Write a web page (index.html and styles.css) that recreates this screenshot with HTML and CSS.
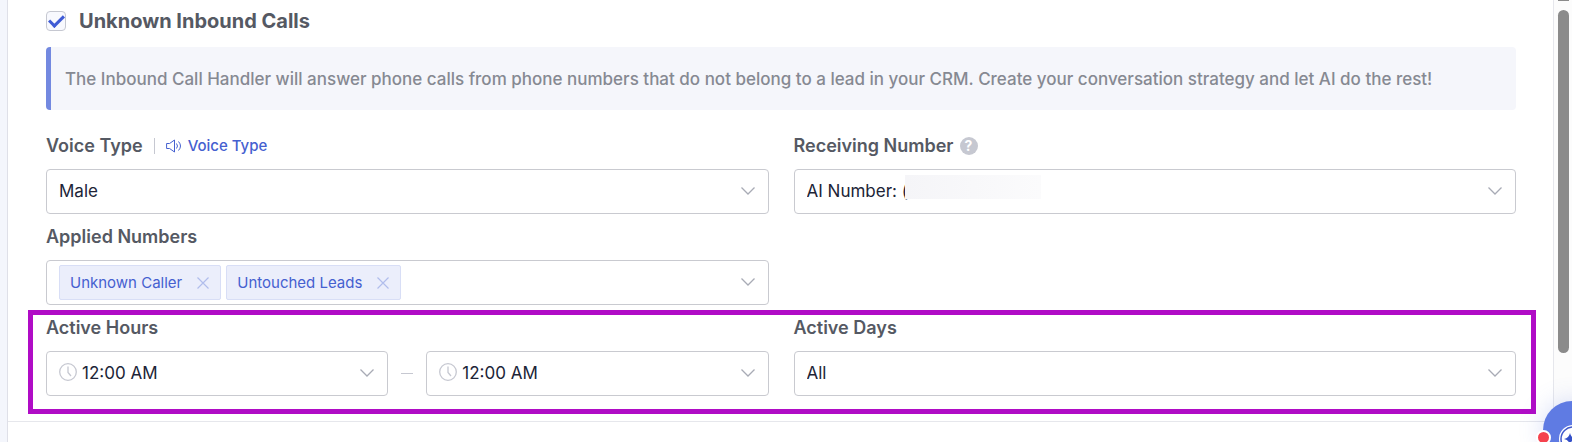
FILE: index.html
```html
<!DOCTYPE html>
<html lang="en">

<head>
    <meta charset="utf-8">
    <title>Inbound Call Handler</title>
    <meta name="viewport" content="initial-scale=1.0, width=device-width">
    <link rel="stylesheet" href="styles.css">
</head>

<body>
    <svg class="sprite" aria-hidden="true">
        <symbol id="chevron" viewBox="0 0 16 16">
            <path d="M1.5 4.5L8 11l6.5-6.5" fill="none" stroke="currentColor" stroke-width="1.3" />
        </symbol>
        <symbol id="cross" viewBox="0 0 12 12">
            <path d="M.5 .5l11 11M11.5 .5l-11 11" fill="none" stroke="currentColor" stroke-width="1.2" />
        </symbol>
        <symbol id="clock" viewBox="0 0 18 18">
            <circle cx="9" cy="9" r="8.3" fill="none" stroke="currentColor" stroke-width="1.3" />
            <path d="M9 3.5v6l3 3.5" fill="none" stroke="currentColor" stroke-width="1.3" />
        </symbol>
    </svg>

    <div id="app">
        <main class="panel">
            <form class="settings" action="javascript:void(0)">
                <label class="title">
                    <input type="checkbox" class="check" checked>
                    <span>Unknown Inbound Calls</span>
                </label>
                <p class="notice">The Inbound Call Handler will answer phone calls from phone numbers that do not belong to a lead in your CRM. Create your conversation strategy and let AI do the rest!</p>

                <div class="row">
                    <div class="field">
                        <div class="caption">
                            <label for="voice">Voice Type</label>
                            <a href="#" class="preview">
                                <svg width="16" height="14" viewBox="0 0 16 14" fill="none" stroke="currentColor">
                                    <path d="M.6 4.5h3L8.5 1v12L3.6 9.5h-3z" />
                                    <path d="M10.5 4.5q2 2.5 0 5M12.5 2.5q4 4.5 0 9" />
                                </svg>
                                Voice Type
                            </a>
                        </div>
                        <div class="select">
                            <select id="voice">
                                <option>Male</option>
                                <option>Female</option>
                            </select>
                            <svg class="chevron"><use href="#chevron" /></svg>
                        </div>
                    </div>
                    <div class="field">
                        <div class="caption">
                            <label for="number">Receiving Number</label>
                            <span class="help">?</span>
                        </div>
                        <div class="select">
                            <select id="number">
                                <option>AI Number: (</option>
                            </select>
                            <span class="masked"></span>
                            <svg class="chevron"><use href="#chevron" /></svg>
                        </div>
                    </div>
                </div>

                <div class="row">
                    <div class="field">
                        <div class="caption" id="applied">Applied Numbers</div>
                        <div class="select tags" role="group" aria-labelledby="applied">
                            <span class="tag">Unknown Caller
                                <button type="button" aria-label="Remove"><svg width="12" height="12"><use href="#cross" /></svg></button>
                            </span>
                            <span class="tag">Untouched Leads
                                <button type="button" aria-label="Remove"><svg width="12" height="12"><use href="#cross" /></svg></button>
                            </span>
                            <svg class="chevron"><use href="#chevron" /></svg>
                        </div>
                    </div>
                </div>

                <div class="row highlight">
                    <div class="field">
                        <div class="caption"><label for="from">Active Hours</label></div>
                        <div class="hours">
                            <div class="select time">
                                <svg class="clock"><use href="#clock" /></svg>
                                <select id="from">
                                    <option>12:00 AM</option>
                                </select>
                                <svg class="chevron"><use href="#chevron" /></svg>
                            </div>
                            <span class="dash"></span>
                            <div class="select time">
                                <svg class="clock"><use href="#clock" /></svg>
                                <select id="to" aria-label="Active hours end">
                                    <option>12:00 AM</option>
                                </select>
                                <svg class="chevron"><use href="#chevron" /></svg>
                            </div>
                        </div>
                    </div>
                    <div class="field">
                        <div class="caption"><label for="days">Active Days</label></div>
                        <div class="select">
                            <select id="days">
                                <option>All</option>
                            </select>
                            <svg class="chevron"><use href="#chevron" /></svg>
                        </div>
                    </div>
                </div>
            </form>
        </main>
        <div class="scrollbar">
            <div class="arrow"></div>
            <div class="thumb"></div>
        </div>

        <button type="button" class="assistant" aria-label="AI assistant">
            <svg width="58" height="58" viewBox="0 0 58 58">
                <circle cx="30" cy="38" r="14" fill="#fff" />
                <circle cx="30" cy="38" r="12" fill="#fff" stroke="#4059cc" stroke-width="1.5" />
                <path d="M27 32q1 5 6 6q-5 1-6 6q-1-5-6-6q5-1 6-6z" fill="#3450c8" />
            </svg>
            <span class="dot"></span>
        </button>
    </div>
</body>

</html>
```

FILE: styles.css
```css
* {
    box-sizing: border-box;
}

body {
    margin: 0;
    background: #fff;
    color: #202437;
    font-family: Inter, "Liberation Sans", sans-serif;
    font-size: 17px;
    line-height: 24px;
}

.sprite {
    display: none;
}

#app {
    position: relative;
    display: flex;
    height: calc(100vh - 3px);
    padding-left: 7px;
    background: #f4f6fc;
    overflow: hidden;
}

.panel {
    flex: 1;
    background: #fff;
    border-left: 1px solid #dfe0e8;
    border-right: 1px solid #e6e7ec;
}

.settings {
    padding: 9px 37px 25px 38px;
    border-bottom: 1px solid #e6e7ec;
}

.title {
    display: flex;
    align-items: center;
    gap: 13px;
    font-size: 20px;
    font-weight: 700;
    color: #555963;
}

.check {
    appearance: none;
    width: 20px;
    height: 20px;
    margin: 0;
    border: 1px solid #c6c8d1;
    border-radius: 4px;
    background: #f8f9fe;
    display: grid;
    place-items: center;
}

.check:checked::before {
    content: "";
    width: 12px;
    height: 6px;
    margin-bottom: 4px;
    border-left: 3px solid #3f5bd5;
    border-bottom: 3px solid #3f5bd5;
    transform: rotate(-45deg);
}

.notice {
    margin: 14px 0 24px;
    padding: 20px 14px 19px;
    border-left: 5px solid #7389e0;
    border-radius: 4px;
    background: #f5f6fb;
    color: #868992;
    font-weight: 500;
}

.row {
    position: relative;
    display: grid;
    grid-template-columns: 1fr 1fr;
    gap: 25px;
    margin-bottom: 11px;
}

.row:last-child {
    margin-bottom: 0;
}

.caption {
    display: flex;
    align-items: center;
    height: 24px;
    margin-bottom: 11px;
    font-size: 18px;
    font-weight: 600;
    color: #555963;
}

.preview {
    display: flex;
    align-items: center;
    gap: 6px;
    height: 16px;
    margin-left: 11px;
    padding-left: 11px;
    border-left: 1px solid #c6c8d1;
    color: #4560d0;
    font-size: 15px;
    font-weight: 500;
    text-decoration: none;
}

.help {
    width: 18px;
    height: 18px;
    margin-left: 6px;
    border-radius: 50%;
    background: #c6c8d1;
    color: #fff;
    font-size: 14px;
    font-weight: 700;
    line-height: 18px;
    text-align: center;
}

.select {
    position: relative;
    height: 45px;
    border: 1px solid #c9cad0;
    border-radius: 4px;
    background: #fff;
}

.select select {
    appearance: none;
    width: 100%;
    height: 100%;
    padding: 0 40px 2px 12px;
    border: 0;
    background: none;
    color: inherit;
    font: inherit;
}

.chevron {
    position: absolute;
    top: 13px;
    right: 12px;
    width: 16px;
    height: 16px;
    color: #a8abb5;
    pointer-events: none;
}

.masked {
    position: absolute;
    top: 5px;
    left: 110px;
    width: 136px;
    height: 24px;
    background: linear-gradient(90deg, #f5f5f8, #fbfbfc);
}

.tags {
    display: flex;
    align-items: center;
    gap: 5px;
    padding-left: 12px;
}

.tag {
    display: flex;
    align-items: center;
    gap: 15px;
    height: 35px;
    padding: 0 11px 0 10px;
    border: 1px solid #d8def6;
    border-radius: 2px;
    background: #ebeefb;
    color: #4560d0;
    font-size: 15px;
}

.tag button {
    display: flex;
    padding: 0;
    border: 0;
    background: none;
    color: #b1bdec;
}

.hours {
    display: flex;
    align-items: center;
    gap: 13px;
}

.time {
    flex: 1;
}

.select.time select {
    padding-left: 35px;
}

.clock {
    position: absolute;
    top: 11px;
    left: 12px;
    width: 18px;
    height: 18px;
    color: #c6c8d1;
}

.dash {
    width: 12px;
    height: 1px;
    background: #c6c8d1;
}

/* marks the active hours and days */
.highlight::after {
    content: "";
    position: absolute;
    inset: -6px -20px -18px -18px;
    border: 5px solid #b00cc6;
    pointer-events: none;
}

.scrollbar {
    width: 18px;
    padding: 0 3px 0 4px;
    background: #fcfcfc;
}

.arrow {
    height: 1px;
    margin-bottom: 9px;
    background: #8b8b8b;
}

.thumb {
    height: 343px;
    border-radius: 6px;
    background: #8b8b8b;
}

.assistant {
    position: absolute;
    right: -29px;
    bottom: -17px;
    width: 58px;
    height: 58px;
    padding: 0;
    border: 0;
    border-radius: 50%;
    background: #5f7be3;
    box-shadow: 0 0 24px rgba(95, 123, 227, .25);
}

.dot {
    position: absolute;
    left: -7px;
    top: 29px;
    width: 15px;
    height: 15px;
    border: 2px solid #fff;
    border-radius: 50%;
    background: #f5424e;
}
```
